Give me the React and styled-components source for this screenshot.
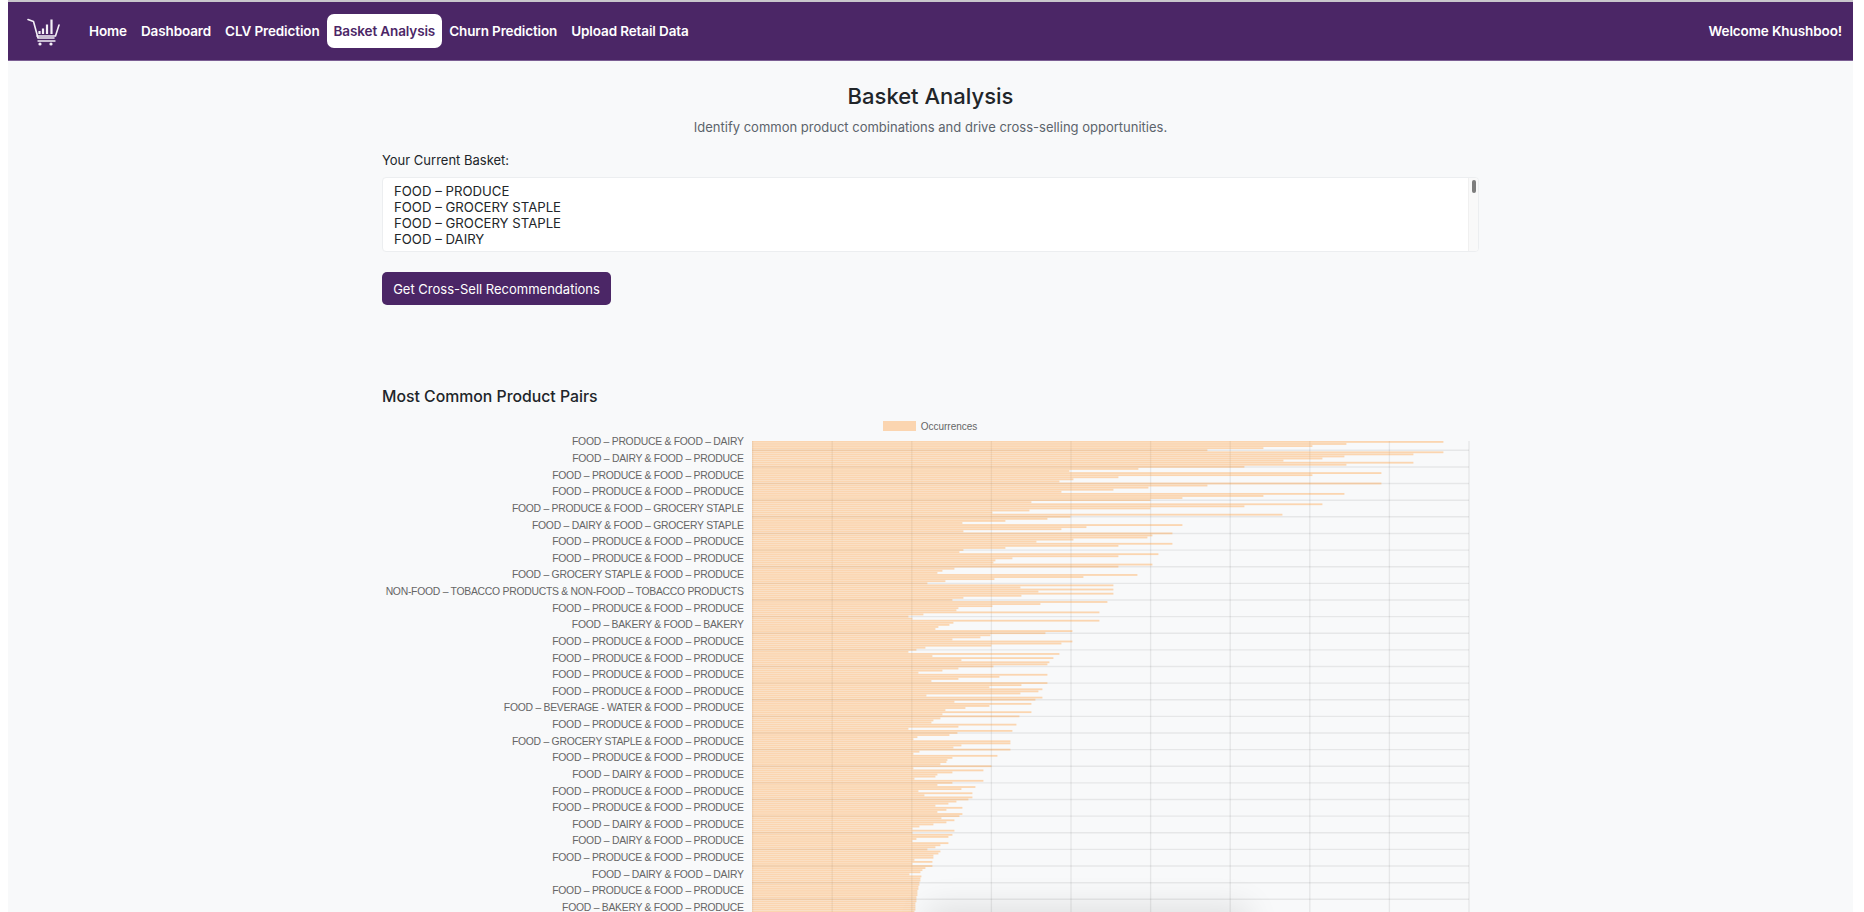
import React from "react";
import styled, { createGlobalStyle } from "styled-components";

const GlobalStyle = createGlobalStyle`
    html, body {
        margin: 0;
        padding: 0;
        height: 912px;
        overflow: hidden;
        background: #ffffff;
    }
`;

const Frame = styled.div`
    width: 1845px;
    height: 912px;
    margin-left: 8px;
    background: #f8f9fa;
    border-top: 2px solid #c9c6cc;
    box-sizing: border-box;
    overflow: hidden;
    position: relative;
    font-family: Inter, "Liberation Sans", sans-serif;
    color: #212529;
`;

const Navbar = styled.nav`
    display: flex;
    align-items: center;
    height: 59px;
    padding: 0 11px 0 19px;
    box-sizing: border-box;
    background: #4b2666;
    border-bottom: 1px solid #7b5f93;
`;

const Logo = styled.svg`
    width: 33px;
    height: 28px;
    margin-right: 22px;
    margin-top: 1px;
`;

const NavLinks = styled.div`
    display: flex;
    align-items: center;
    flex: 1;
`;

const NavLink = styled.a`
    height: 34px;
    padding: 0 7px;
    display: flex;
    align-items: center;
    border-radius: 7px;
    font-size: 13.5px;
    font-weight: 600;
    letter-spacing: -0.12px;
    white-space: nowrap;
    color: ${(p) => (p.$active ? "#4b2666" : "#ffffff")};
    background: ${(p) => (p.$active ? "#ffffff" : "transparent")};
`;

const Welcome = styled.span`
    font-size: 13.5px;
    font-weight: 600;
    letter-spacing: -0.1px;
    color: #ffffff;
`;

const Main = styled.main`
    width: 1097px;
    margin: 0 auto;
`;

const Title = styled.h1`
    margin: 21px 0 0;
    height: 29px;
    line-height: 29px;
    text-align: center;
    font-size: 22px;
    font-weight: 500;
`;

const Subtitle = styled.p`
    margin: 7px 0 0;
    height: 18px;
    line-height: 18px;
    text-align: center;
    font-size: 13px;
    color: #5c646c;
`;

const FieldLabel = styled.div`
    margin-top: 15px;
    height: 18px;
    line-height: 18px;
    font-size: 13px;
`;

const BasketBox = styled.div`
    display: flex;
    height: 75px;
    margin-top: 8px;
    box-sizing: border-box;
    background: #ffffff;
    border: 1px solid #eceef0;
    border-radius: 4px;
    overflow: hidden;
`;

const BasketItems = styled.div`
    flex: 1;
    padding: 5px 11px;
    font-size: 13.2px;
    line-height: 16px;
`;

const ScrollTrack = styled.div`
    width: 10px;
    padding: 2px 2px 0 3px;
    box-sizing: border-box;
    background: #f9f9f9;
    border-left: 1px solid #f0f0f0;
`;

const ScrollThumb = styled.div`
    height: 13px;
    border-radius: 3px;
    background: #7d7d7d;
`;

const PrimaryButton = styled.button`
    display: block;
    width: 229px;
    height: 33px;
    margin-top: 20px;
    padding: 0;
    border: 0;
    border-radius: 5px;
    background: #4b2666;
    color: #ffffff;
    font-family: inherit;
    font-size: 13px;
`;

const SectionTitle = styled.h2`
    margin: 82px 0 0;
    height: 20px;
    line-height: 20px;
    font-size: 15.8px;
    font-weight: 500;
`;

const Legend = styled.div`
    display: flex;
    align-items: center;
    justify-content: center;
    gap: 5px;
    height: 12px;
    margin: 13px 0 0 -1px;
    font-family: "Liberation Sans", sans-serif;
    font-size: 10px;
    color: #666666;
`;

const LegendSwatch = styled.span`
    width: 33px;
    height: 10px;
    background: #fbd5b0;
`;

const ChartRow = styled.div`
    display: flex;
    align-items: flex-start;
    margin-top: 2.4px;
`;

const AxisLabels = styled.div`
    width: 369.6px;
    flex: none;
    padding-right: 8px;
    box-sizing: border-box;
    text-align: right;
    font-family: "Liberation Sans", sans-serif;
    font-size: 10.4px;
    letter-spacing: -0.27px;
    color: #666666;
`;

const AxisLabel = styled.div`
    height: 16.63px;
    line-height: 15.6px;
    white-space: nowrap;
`;

const Plot = styled.svg`
    flex: none;
    margin-top: 7px;
    display: block;
`;

const BottomShade = styled.div`
    position: absolute;
    left: 925px;
    bottom: -30px;
    width: 310px;
    height: 30px;
    background: #eeeeee;
    box-shadow: 0 0 32px 6px rgba(0, 0, 0, 0.1);
    pointer-events: none;
`;

const navItems = ["Home", "Dashboard", "CLV Prediction", "Basket Analysis", "Churn Prediction", "Upload Retail Data"];
const basket = ["FOOD – PRODUCE", "FOOD – GROCERY STAPLE", "FOOD – GROCERY STAPLE", "FOOD – DAIRY"];

const P = "PRODUCE";
const D = "DAIRY";
const G = "GROCERY STAPLE";
const B = "BAKERY";
const pair = (a, b) => `FOOD – ${a} & FOOD – ${b}`;
const labels = [
    pair(P, D), pair(D, P), pair(P, P), pair(P, P), pair(P, G), pair(D, G), pair(P, P), pair(P, P),
    pair(G, P), "NON-FOOD – TOBACCO PRODUCTS & NON-FOOD – TOBACCO PRODUCTS", pair(P, P), pair(B, B),
    pair(P, P), pair(P, P), pair(P, P), pair(P, P), pair("BEVERAGE - WATER", P), pair(P, P), pair(G, P),
    pair(P, P), pair(D, P), pair(P, P), pair(P, P), pair(D, P), pair(D, P), pair(P, P), pair(D, D),
    pair(P, P), pair(B, P),
];

// right-hand end of each bar, in page pixels, read top to bottom
const barEnds = [
    1443, 1346, 1312, 1263, 1207, 1443, 1413, 1344, 1322, 1283, 1413, 1346, 1244, 1138, 1069,
    1381, 1312, 1118, 1073, 1059, 1381, 1207, 1148, 1113, 1061, 1344, 1263, 1182, 1150, 1031,
    1322, 1244, 1150, 1029, 992, 1282, 1070, 1047, 1005, 962, 1182, 1086, 1061, 963,
    1172, 1152, 1147, 1073, 1036, 1172, 1118, 1005, 963, 959, 1158, 1118, 1012, 995, 993,
    1152, 1118, 954, 942, 937, 1137, 1083, 994, 945, 927, 1113, 1020, 1113, 1038, 1113,
    1021, 963, 952, 1107, 1040, 992, 958, 956, 1099, 923, 908, 912, 1099, 953, 949, 938, 935,
    1072, 1045, 990, 980, 952, 1072, 1061, 991, 925, 916, 908, 1059, 932, 1053, 961, 1049,
    1047, 993, 958, 942, 918, 1047, 999, 958, 931, 1047, 1021, 989, 1042, 1038, 1020, 926,
    1042, 1035, 954, 1031, 989, 965, 945, 1031, 942, 1019, 940, 933, 931, 1016, 958, 908,
    1012, 957, 949, 917, 913, 1010, 1010, 961, 953, 1010, 919, 913, 997, 952, 947, 946, 940,
    991, 913, 983, 952, 937, 935, 914, 983, 952, 937, 975, 961, 918, 972, 924, 972, 968, 956,
    948, 935, 962, 946, 937, 962, 959, 941, 954, 946, 933, 919, 912, 954, 912, 952, 948, 916,
    912, 948, 940, 935, 927, 940, 938, 933, 933, 914, 932, 912, 932, 925, 922, 920, 909, 921,
    920, 920, 919, 919, 918, 918, 917, 917, 917, 916, 916, 916, 915, 915, 915, 915, 914, 914,
    914, 914,
];

const PLOT_LEFT = 751.6;
const gridX = Array.from({ length: 10 }, (_, i) => 0.6 + i * 79.6);
const gridY = Array.from({ length: 29 }, (_, i) => 9.3 + i * 16.63);

const CartLogo = () => (
    <Logo viewBox="0 0 33 28" fill="none" stroke="#f4f0f7" strokeLinecap="round" strokeLinejoin="round">
        <path d="M1 1.5 L6.5 3.5 L11 20 H27" strokeWidth="1.6" />
        <path d="M32 7 L28.5 18 H10" strokeWidth="1.6" />
        <path d="M12.5 16 V13 M16 16 V10.5 M20 16 V6.5 M24.5 16 V1.5" strokeWidth="2.2" strokeLinecap="butt" />
        <path d="M11 23 H28" strokeWidth="1.3" />
        <circle cx="13" cy="26" r="1.6" fill="#f4f0f7" stroke="none" />
        <circle cx="24" cy="26" r="1.6" fill="#f4f0f7" stroke="none" />
    </Logo>
);

const BarChart = () => (
    <Plot width="725" height="480" viewBox="0 0 725 480">
        {gridX.map((x) => (
            <line key={x} x1={x} x2={x} y1="0" y2="480" stroke="rgba(0,0,0,0.07)" strokeWidth="1.4" />
        ))}
        {gridY.map((y) => (
            <line key={y} x1="0" x2="717" y1={y} y2={y} stroke="rgba(0,0,0,0.07)" strokeWidth="1.4" />
        ))}
        {barEnds.map((end, i) => (
            <rect
                key={i}
                x="0"
                y={i * 2.079}
                width={end - PLOT_LEFT}
                height="1.8"
                fill="rgba(255,159,64,0.4)"
            />
        ))}
    </Plot>
);

export default function App() {
    return (
        <>
            <GlobalStyle />
            <Frame>
                <Navbar>
                    <CartLogo />
                    <NavLinks>
                        {navItems.map((item) => (
                            <NavLink key={item} $active={item === "Basket Analysis"}>
                                {item}
                            </NavLink>
                        ))}
                    </NavLinks>
                    <Welcome>Welcome Khushboo!</Welcome>
                </Navbar>
                <Main>
                    <Title>Basket Analysis</Title>
                    <Subtitle>Identify common product combinations and drive cross-selling opportunities.</Subtitle>
                    <FieldLabel>Your Current Basket:</FieldLabel>
                    <BasketBox>
                        <BasketItems>
                            {basket.map((item, i) => (
                                <div key={i}>{item}</div>
                            ))}
                        </BasketItems>
                        <ScrollTrack>
                            <ScrollThumb />
                        </ScrollTrack>
                    </BasketBox>
                    <PrimaryButton>Get Cross-Sell Recommendations</PrimaryButton>
                    <SectionTitle>Most Common Product Pairs</SectionTitle>
                    <Legend>
                        <LegendSwatch />
                        Occurrences
                    </Legend>
                    <ChartRow>
                        <AxisLabels>
                            {labels.map((label, i) => (
                                <AxisLabel key={i}>{label}</AxisLabel>
                            ))}
                        </AxisLabels>
                        <BarChart />
                    </ChartRow>
                </Main>
                <BottomShade />
            </Frame>
        </>
    );
}
